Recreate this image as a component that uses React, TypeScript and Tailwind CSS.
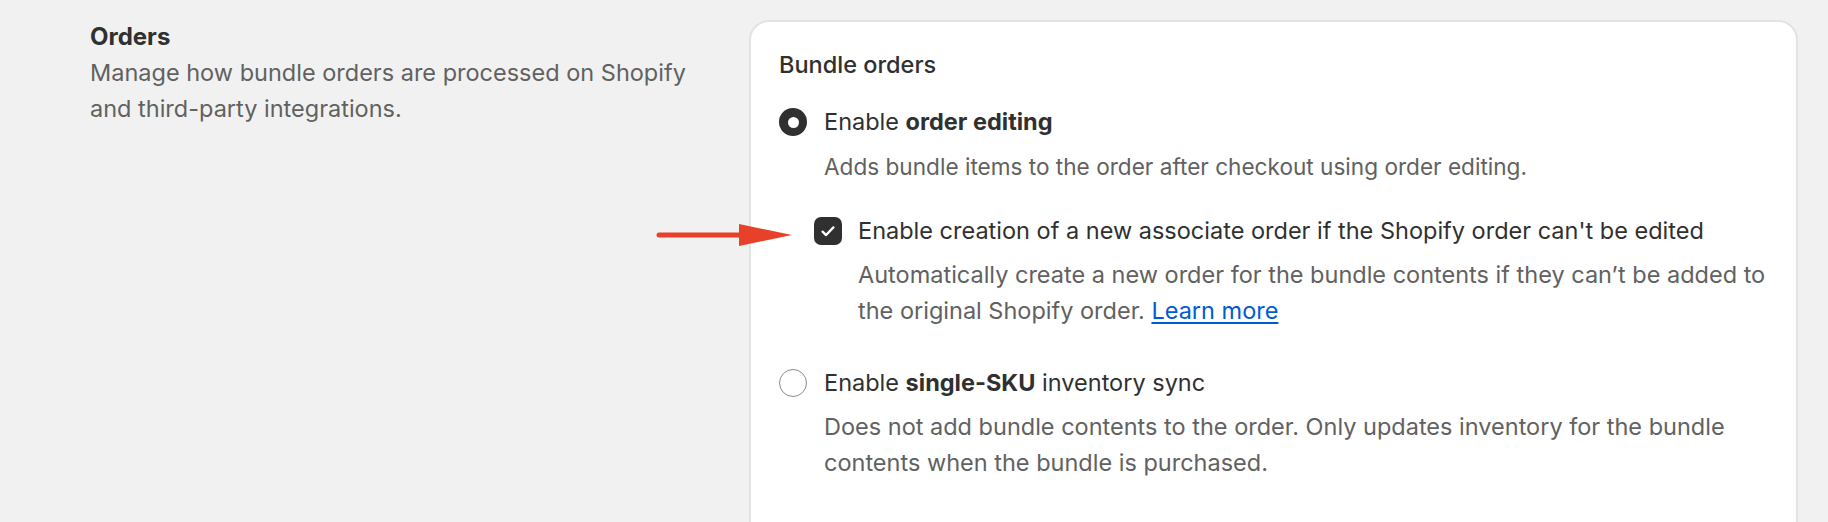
import React from 'react';

const font = "font-['Inter','Noto_Sans',sans-serif]";

const Radio = ({ checked }: { checked: boolean }) =>
  checked ? (
    <span className="mt-[4px] flex h-[28px] w-[28px] shrink-0 items-center justify-center rounded-full bg-[#303030]">
      <span className="h-[11px] w-[11px] rounded-full bg-white" />
    </span>
  ) : (
    <span className="mt-[4px] h-[28px] w-[28px] shrink-0 rounded-full border border-[#8a8a8a] bg-white" />
  );

const Checkbox = () => (
  <span className="mt-[4px] flex h-[28px] w-[28px] shrink-0 items-center justify-center rounded-[7px] bg-[#303030]">
    <svg width="18" height="18" viewBox="0 0 16 16" fill="none">
      <path d="M3.2 8.6l3.1 3L12.8 4.8" stroke="white" strokeWidth="2.1" strokeLinecap="round" strokeLinejoin="round" />
    </svg>
  </span>
);

const Arrow = () => (
  <svg className="absolute left-[652px] top-[222px]" width="142" height="26" viewBox="0 0 142 26">
    <line x1="7" y1="13" x2="90" y2="13" stroke="#e8412a" strokeWidth="5" strokeLinecap="round" />
    <polygon points="87,2 87,24 140,13" fill="#e8412a" />
  </svg>
);

export default function App() {
  return (
    <div className={`relative flex h-[522px] w-full overflow-hidden bg-[#f1f1f1] pl-[90px] pt-[20px] text-[23.5px] leading-[36px] ${font}`}>
      <div className="w-[620px] shrink-0">
        <h2 className="-mt-[1px] text-[24px] font-bold text-[#303030]">Orders</h2>
        <p className="text-[#616161]">
          Manage how bundle orders are processed on Shopify and third-party integrations.
        </p>
      </div>

      <div className="ml-[39px] h-[560px] w-[1049px] shrink-0 rounded-[20px] border-2 border-[#e3e3e3] bg-white pl-[28px] pr-[18px] pt-[25px]">
        <div className="font-medium text-[#303030]">Bundle orders</div>

        <div className="mt-[21px] flex gap-[17px]">
          <Radio checked />
          <div>
            <div className="text-[#303030]">
              Enable <span className="font-bold">order editing</span>
            </div>
            <div className="mt-[9px] text-[22.6px] text-[#616161]">
              Adds bundle items to the order after checkout using order editing.
            </div>

            <div className="mt-[28px] -ml-[10px] flex gap-[16px]">
              <Checkbox />
              <div>
                <div className="text-[#303030]">
                  Enable creation of a new associate order if the Shopify order can't be edited
                </div>
                <div className="mt-[8px] w-[910px] text-[#616161]">
                  Automatically create a new order for the bundle contents if they can’t be added to the original Shopify order.{' '}
                  <a href="#" className="text-[#005bd3] underline underline-offset-[3px]">Learn more</a>
                </div>
              </div>
            </div>
          </div>
        </div>

        <div className="mt-[36px] flex gap-[17px]">
          <Radio checked={false} />
          <div>
            <div className="text-[#303030]">
              Enable <span className="font-bold">single-SKU</span> inventory sync
            </div>
            <div className="mt-[8px] w-[955px] text-[#616161]">
              Does not add bundle contents to the order. Only updates inventory for the bundle contents when the bundle is purchased.
            </div>
          </div>
        </div>
      </div>

      <Arrow />
    </div>
  );
}
